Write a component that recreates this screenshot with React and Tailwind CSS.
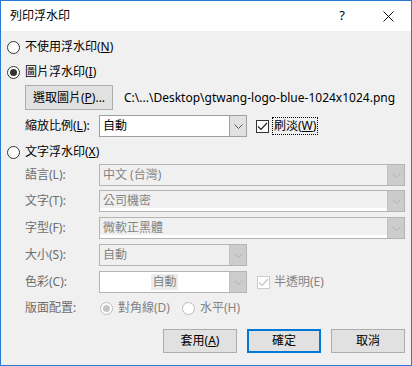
import React from 'react';

const font = { fontFamily: '"Noto Sans", "Noto Sans CJK TC", sans-serif' };

const Chevron = ({ color = '#606060' }) => (
  <svg width="9" height="5" viewBox="0 0 9 5" fill="none">
    <path d="M0.5 0.5 L4.5 4.5 L8.5 0.5" stroke={color} strokeWidth="1" />
  </svg>
);

const Radio = ({ checked, disabled }) => (
  <span
    className={`flex h-[13px] w-[13px] shrink-0 items-center justify-center rounded-full border bg-white ${
      disabled ? 'border-[#bcbcbc]' : 'border-[#333333]'
    }`}
  >
    {checked && (
      <span className={`h-[7px] w-[7px] rounded-full ${disabled ? 'bg-[#c4c4c4]' : 'bg-[#333333]'}`} />
    )}
  </span>
);

const Check = ({ disabled }) => (
  <span
    className={`flex h-[13px] w-[13px] shrink-0 items-center justify-center border bg-white ${
      disabled ? 'border-[#cccccc]' : 'border-[#333333]'
    }`}
  >
    <svg width="11" height="9" viewBox="0 0 11 9" fill="none">
      <path d="M1 4.5 L4 7.5 L10 1" stroke={disabled ? '#c4c4c4' : '#222222'} strokeWidth="1.2" />
    </svg>
  </span>
);

// disabled / enabled combo boxes
const Combo = ({ text, width, variant = 'disabled', center }) => {
  const white = variant === 'enabled' || variant === 'white';
  return (
    <div
      className={`relative flex h-[22px] items-center border ${
        variant === 'enabled' ? 'border-[#a0a0a0]' : 'border-[#b4b4b4]'
      } ${white ? 'bg-white' : 'bg-[#f0f0f0]'}`}
      style={{ width }}
    >
      {variant === 'edit' && <div className="absolute bottom-0 left-0 right-[17px] h-[3px] bg-white" />}
      <div className={`relative flex flex-1 items-center ${center ? 'justify-center' : 'pl-[3px]'}`}>
        <span
          className={`text-[12px] leading-[16px] ${
            variant === 'enabled' ? 'text-black' : 'text-[#838383]'
          } ${center ? 'bg-[#ececec] px-[1px]' : ''}`}
        >
          {text}
        </span>
      </div>
      <div
        className={`flex h-full w-[17px] items-center justify-center border-l ${
          variant === 'enabled' ? 'border-[#a0a0a0] bg-[#e1e1e1]' : 'border-[#c0c0c0] bg-[#cccccc]'
        }`}
      >
        <Chevron color={variant === 'enabled' ? '#555555' : '#b0b0b0'} />
      </div>
    </div>
  );
};

const Label = ({ children, disabled }) => (
  <span className={`w-[74px] shrink-0 text-[12px] leading-[16px] ${disabled ? 'text-[#6d6d6d]' : 'text-black'}`}>
    {children}
  </span>
);

const Btn = ({ children, focus }) => (
  <div
    className={`flex h-[24px] w-[74px] items-center justify-center text-[12px] text-black ${
      focus ? 'border-2 border-[#0078d7] bg-[#e1e1e1]' : 'border border-[#adadad] bg-[#e1e1e1]'
    }`}
  >
    {children}
  </div>
);

export default function App() {
  return (
    <div className="h-[366px] w-[412px] border border-[#2b79d0] bg-[#f0f0f0]" style={font}>
      {/* title bar */}
      <div className="flex h-[30px] items-center bg-white pl-[9px]">
        <span className="flex-1 text-[12px] text-black">列印浮水印</span>
        <span className="w-[46px] text-center text-[13px] text-black">?</span>
        <span className="flex w-[46px] justify-center">
          <svg width="11" height="11" viewBox="0 0 11 11">
            <path d="M0.5 0.5 L10.5 10.5 M10.5 0.5 L0.5 10.5" stroke="#111" strokeWidth="1" />
          </svg>
        </span>
      </div>

      <div className="flex flex-col pl-[6px] pr-[6px] text-[12px] leading-[16px] text-black">
        <div className="mt-[5px] flex h-[22px] items-center gap-[5px]">
          <Radio />
          <span>
            不使用浮水印(<u>N</u>)
          </span>
        </div>
        <div className="mt-[3px] flex h-[22px] items-center gap-[5px]">
          <Radio checked />
          <span>
            圖片浮水印(<u>I</u>)
          </span>
        </div>

        <div className="mt-[2px] flex h-[25px] items-center pl-[18px]">
          <div className="flex h-full w-[88px] items-center justify-center border border-[#adadad] bg-[#e1e1e1]">
            選取圖片(<u>P</u>)...
          </div>
          <span className="ml-[11px] whitespace-nowrap">C:\...\Desktop\gtwang-logo-blue-1024x1024.png</span>
        </div>

        <div className="mt-[5px] flex h-[22px] items-center pl-[18px]">
          <Label>
            縮放比例(<u>L</u>):
          </Label>
          <Combo text="自動" width={148} variant="enabled" />
          <div className="ml-[9px] flex items-center gap-[3px]">
            <Check />
            <span className="border border-dotted border-black px-[1px]">
              刷淡(<u>W</u>)
            </span>
          </div>
        </div>

        <div className="mt-[4px] flex h-[22px] items-center gap-[5px]">
          <Radio />
          <span>
            文字浮水印(<u>X</u>)
          </span>
        </div>

        <div className="mt-[1px] flex h-[22px] items-center pl-[18px]">
          <Label disabled>語言(L):</Label>
          <Combo text="中文 (台灣)" width={306} />
        </div>
        <div className="mt-[4px] flex h-[22px] items-center pl-[18px]">
          <Label disabled>文字(T):</Label>
          <Combo text="公司機密" width={306} variant="edit" />
        </div>
        <div className="mt-[5px] flex h-[22px] items-center pl-[18px]">
          <Label disabled>字型(F):</Label>
          <Combo text="微軟正黑體" width={306} variant="edit" />
        </div>
        <div className="mt-[5px] flex h-[22px] items-center pl-[18px]">
          <Label disabled>大小(S):</Label>
          <Combo text="自動" width={148} />
        </div>
        <div className="mt-[5px] flex h-[22px] items-center pl-[18px]">
          <Label disabled>色彩(C):</Label>
          <Combo text="自動" width={148} variant="white" center />
          <div className="ml-[10px] flex items-center gap-[4px] text-[#838383]">
            <Check disabled />
            <span>半透明(E)</span>
          </div>
        </div>
        <div className="mt-[4px] flex h-[22px] items-center pl-[18px]">
          <Label disabled>版面配置:</Label>
          <div className="ml-[1px] flex items-center gap-[5px] text-[#838383]">
            <Radio checked disabled />
            <span>對角線(D)</span>
          </div>
          <div className="ml-[12px] flex items-center gap-[5px] text-[#838383]">
            <Radio disabled />
            <span>水平(H)</span>
          </div>
        </div>

        <div className="mt-[10px] flex justify-end gap-[10px] pr-[0px]">
          <Btn>
            套用(<u>A</u>)
          </Btn>
          <Btn focus>確定</Btn>
          <Btn>取消</Btn>
        </div>
      </div>
    </div>
  );
}
